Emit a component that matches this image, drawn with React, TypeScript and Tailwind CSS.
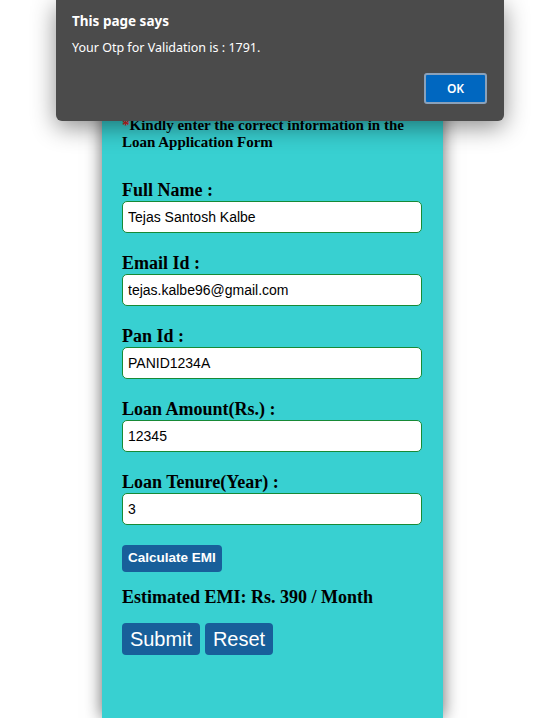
const FIELDS = [
  { label: "Full Name :", value: "Tejas Santosh Kalbe" },
  { label: "Email Id :", value: "tejas.kalbe96@gmail.com" },
  { label: "Pan Id :", value: "PANID1234A" },
  { label: "Loan Amount(Rs.) :", value: "12345" },
  { label: "Loan Tenure(Year) :", value: "3" },
];

function AlertDialog() {
  return (
    <div
      className="absolute left-[56px] top-0 w-[448px] h-[121px] bg-[#4b4b4b] rounded-b-[6px] shadow-[0_6px_24px_rgba(0,0,0,0.45)] px-4 pt-[12px] text-white"
      style={{ fontFamily: "'Noto Sans', 'Open Sans', sans-serif" }}
    >
      <p className="text-[13.5px] font-bold leading-[18px]">This page says</p>
      <p className="text-[12.5px] leading-[18px] mt-[9px]">Your Otp for Validation is : 1791.</p>
      <div className="flex justify-end mt-[16px] pr-[1px]">
        <button className="w-[63px] h-[31px] bg-[#0067c0] border-2 border-[#8aa1ba] rounded-[3px] text-[12px] font-semibold text-white">
          OK
        </button>
      </div>
    </div>
  );
}

export default function App() {
  return (
    <div className="relative h-[718px] w-[560px] overflow-hidden bg-white">
      <div
        className="ml-[102px] w-[341px] h-full bg-[#38d0d1] shadow-[0_0_16px_rgba(0,0,0,0.6)] px-5 pt-[117px]"
        style={{ fontFamily: "'Liberation Serif', serif" }}
      >
        <p className="text-[15px] leading-[17px] font-bold text-black">
          <span className="text-[#e0201c]">*</span>Kindly enter the correct information in the Loan Application Form
        </p>

        <div className="mt-[29px]">
          {FIELDS.map((f) => (
            <div key={f.label} className="mb-[20px]">
              <label className="block text-[18px] leading-[21px] font-bold text-black">{f.label}</label>
              <input
                readOnly
                value={f.value}
                className="block w-[300px] h-[32px] bg-white border border-[#178a36] rounded-[5px] px-[5px] text-[14px] text-black outline-none"
                style={{ fontFamily: "'Liberation Sans', Arial, sans-serif" }}
              />
            </div>
          ))}
        </div>

        <div style={{ fontFamily: "'Liberation Sans', Arial, sans-serif" }}>
          <button className="h-[27px] px-[6px] bg-[#185f9a] rounded-[4px] text-[13.5px] font-bold text-white">
            Calculate EMI
          </button>
        </div>

        <p className="mt-[14px] text-[18px] leading-[22px] font-bold text-black">
          Estimated EMI: Rs. 390 / Month
        </p>

        <div className="flex gap-[5px] mt-[15px]" style={{ fontFamily: "'Liberation Sans', Arial, sans-serif" }}>
          <button className="h-[32px] w-[78px] bg-[#185f9a] rounded-[4px] text-[20px] text-white">Submit</button>
          <button className="h-[32px] w-[68px] bg-[#185f9a] rounded-[4px] text-[20px] text-white">Reset</button>
        </div>
      </div>

      <AlertDialog />
    </div>
  );
}
